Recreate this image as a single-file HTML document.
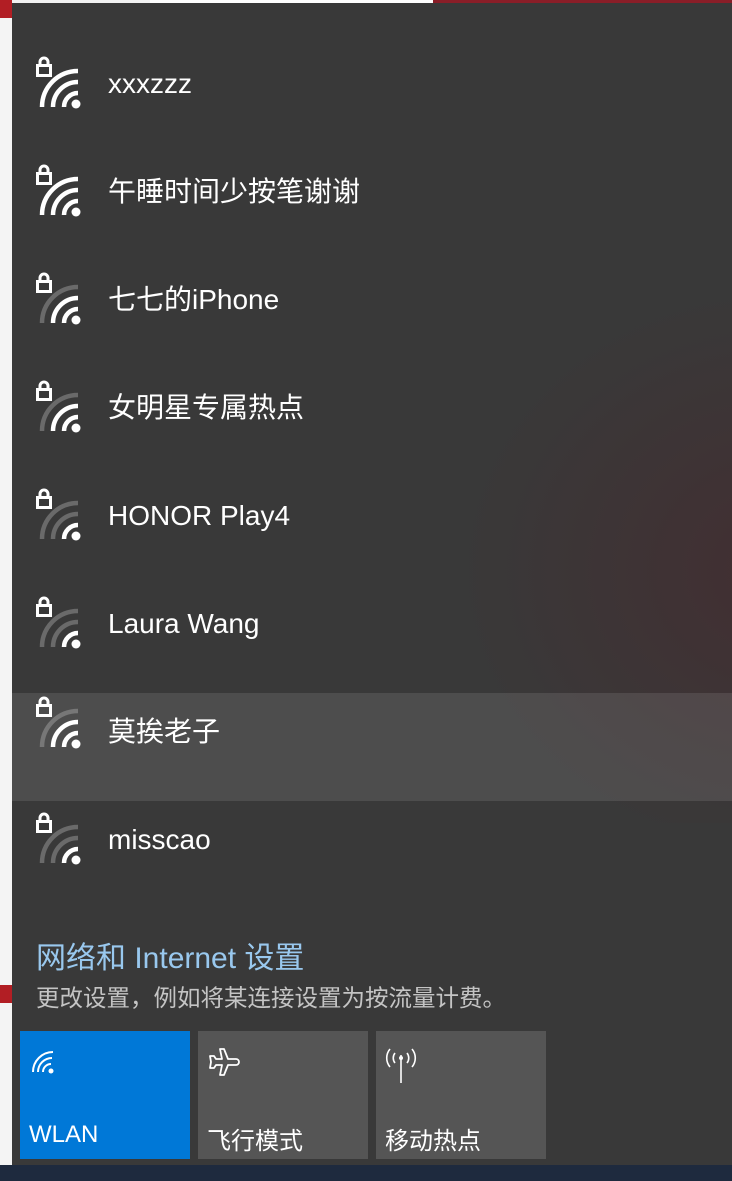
<!DOCTYPE html>
<html><head><meta charset="utf-8"><style>
*{margin:0;padding:0;box-sizing:border-box}
body{width:732px;height:1181px;overflow:hidden;background:#f2f2f2;position:relative;font-family:"Liberation Sans","Noto Sans CJK SC",sans-serif}
.left{position:absolute;left:0;top:0;width:12px;height:1181px;background:#f4f4f4}
.panel{position:absolute;left:12px;top:3px;width:720px;height:1162px;background:#393939;overflow:hidden}
.glow{position:absolute;left:420px;top:260px;width:500px;height:560px;background:radial-gradient(ellipse at 70% 55%,rgba(80,30,38,.4),rgba(80,30,38,0) 65%)}
.row{position:absolute;left:0;width:720px;height:108px}
.row.h{background:rgba(255,255,255,.1)}
.row svg{position:absolute;left:20px;top:23px}
.row span{position:absolute;left:96px;top:35px;font-size:28px;color:#fff;line-height:36px;white-space:nowrap}
.link{position:absolute;left:24px;top:930px;font-size:30px;color:#99c8ee}
.sub{position:absolute;left:24px;top:976px;font-size:23.5px;color:#c4c4c4}
.tile{position:absolute;top:1028px;width:170px;height:128px;background:#555}
.tile span{position:absolute;left:9px;top:90px;font-size:24px;color:#fff}
.tile svg{position:absolute;left:8px;top:14px}
.task{position:absolute;left:0;top:1165px;width:732px;height:16px;background:#1e2a3e}
</style></head><body>
<div class="left"><div style="position:absolute;top:0;height:18px;width:12px;background:#b21e24"></div><div style="position:absolute;top:985px;height:18px;width:12px;background:#b21e24"></div></div>
<div style="position:absolute;left:150px;top:0;width:283px;height:3px;background:#fff"></div>
<div style="position:absolute;left:433px;top:0;width:299px;height:3px;background:#8a1e28"></div>
<div class="panel">
<div class="glow"></div>
<svg width="0" height="0" style="position:absolute"><defs>
<g id="lk"><rect x="5.5" y="11.5" width="13" height="10" fill="none" stroke="#fff" stroke-width="3"/><path d="M8 11.5V8a4 4 0 0 1 8 0v3.5" fill="none" stroke="#fff" stroke-width="3"/></g>
</defs></svg>
<div class="row" style="top:28px"><svg width="70" height="80"><use href="#lk"/><path d="M10 53a36 36 0 0 1 36-36" fill="none" stroke="#fff" stroke-width="4.5"/><path d="M21 53a25 25 0 0 1 25-25" fill="none" stroke="#fff" stroke-width="4.5"/><path d="M32 53a14 14 0 0 1 14-14" fill="none" stroke="#fff" stroke-width="4.5"/><circle cx="44" cy="50" r="4.5" fill="#fff"/></svg><span>xxxzzz</span></div>
<div class="row" style="top:136px"><svg width="70" height="80"><use href="#lk"/><path d="M10 53a36 36 0 0 1 36-36" fill="none" stroke="#fff" stroke-width="4.5"/><path d="M21 53a25 25 0 0 1 25-25" fill="none" stroke="#fff" stroke-width="4.5"/><path d="M32 53a14 14 0 0 1 14-14" fill="none" stroke="#fff" stroke-width="4.5"/><circle cx="44" cy="50" r="4.5" fill="#fff"/></svg><span>午睡时间少按笔谢谢</span></div>
<div class="row" style="top:244px"><svg width="70" height="80"><use href="#lk"/><path d="M10 53a36 36 0 0 1 36-36" fill="none" stroke="#6a6a6a" stroke-width="4.5"/><path d="M21 53a25 25 0 0 1 25-25" fill="none" stroke="#fff" stroke-width="4.5"/><path d="M32 53a14 14 0 0 1 14-14" fill="none" stroke="#fff" stroke-width="4.5"/><circle cx="44" cy="50" r="4.5" fill="#fff"/></svg><span>七七的iPhone</span></div>
<div class="row" style="top:352px"><svg width="70" height="80"><use href="#lk"/><path d="M10 53a36 36 0 0 1 36-36" fill="none" stroke="#6a6a6a" stroke-width="4.5"/><path d="M21 53a25 25 0 0 1 25-25" fill="none" stroke="#fff" stroke-width="4.5"/><path d="M32 53a14 14 0 0 1 14-14" fill="none" stroke="#fff" stroke-width="4.5"/><circle cx="44" cy="50" r="4.5" fill="#fff"/></svg><span>女明星专属热点</span></div>
<div class="row" style="top:460px"><svg width="70" height="80"><use href="#lk"/><path d="M10 53a36 36 0 0 1 36-36" fill="none" stroke="#6a6a6a" stroke-width="4.5"/><path d="M21 53a25 25 0 0 1 25-25" fill="none" stroke="#6a6a6a" stroke-width="4.5"/><path d="M32 53a14 14 0 0 1 14-14" fill="none" stroke="#fff" stroke-width="4.5"/><circle cx="44" cy="50" r="4.5" fill="#fff"/></svg><span>HONOR Play4</span></div>
<div class="row" style="top:568px"><svg width="70" height="80"><use href="#lk"/><path d="M10 53a36 36 0 0 1 36-36" fill="none" stroke="#6a6a6a" stroke-width="4.5"/><path d="M21 53a25 25 0 0 1 25-25" fill="none" stroke="#6a6a6a" stroke-width="4.5"/><path d="M32 53a14 14 0 0 1 14-14" fill="none" stroke="#fff" stroke-width="4.5"/><circle cx="44" cy="50" r="4.5" fill="#fff"/></svg><span>Laura Wang</span></div>
<div class="row h" style="top:690px"><svg width="70" height="80" style="top:1px"><use href="#lk"/><path d="M10 53a36 36 0 0 1 36-36" fill="none" stroke="#777" stroke-width="4.5"/><path d="M21 53a25 25 0 0 1 25-25" fill="none" stroke="#fff" stroke-width="4.5"/><path d="M32 53a14 14 0 0 1 14-14" fill="none" stroke="#fff" stroke-width="4.5"/><circle cx="44" cy="50" r="4.5" fill="#fff"/></svg><span style="top:21px">莫挨老子</span></div>
<div class="row" style="top:784px"><svg width="70" height="80"><use href="#lk"/><path d="M10 53a36 36 0 0 1 36-36" fill="none" stroke="#6a6a6a" stroke-width="4.5"/><path d="M21 53a25 25 0 0 1 25-25" fill="none" stroke="#6a6a6a" stroke-width="4.5"/><path d="M32 53a14 14 0 0 1 14-14" fill="none" stroke="#fff" stroke-width="4.5"/><circle cx="44" cy="50" r="4.5" fill="#fff"/></svg><span>misscao</span></div>
<div class="link">网络和 Internet 设置</div>
<div class="sub">更改设置，例如将某连接设置为按流量计费。</div>
<div class="tile" style="left:8px;background:#0078d7"><svg width="30" height="30"><path d="M5 27a20 20 0 0 1 20-20" fill="none" stroke="#fff" stroke-width="2"/><path d="M10 27a14 14 0 0 1 14-14" fill="none" stroke="#fff" stroke-width="2"/><path d="M15 27a8 8 0 0 1 8-8" fill="none" stroke="#fff" stroke-width="2"/><circle cx="23" cy="26" r="2.5" fill="#fff"/></svg><span>WLAN</span></div>
<div class="tile" style="left:186px"><svg width="36" height="36"><path d="M14 4h4l4 10h8a3 3 0 0 1 0 6h-8l-4 10h-4l2-10h-6l-2 3h-4l1-6-1-6h4l2 3h6z" fill="none" stroke="#fff" stroke-width="1.8" stroke-linejoin="round"/></svg><span>飞行模式</span></div>
<div class="tile" style="left:364px"><svg width="36" height="40"><path d="M6 4a14 14 0 0 0 0 18M28 4a14 14 0 0 1 0 18M11 8a8 8 0 0 0 0 10M23 8a8 8 0 0 1 0 10" fill="none" stroke="#fff" stroke-width="1.6"/><path d="M17 10v28" stroke="#fff" stroke-width="1.6"/><circle cx="17" cy="13" r="2" fill="#fff"/></svg><span>移动热点</span></div>
</div>
<div class="task"></div>
</body></html>
